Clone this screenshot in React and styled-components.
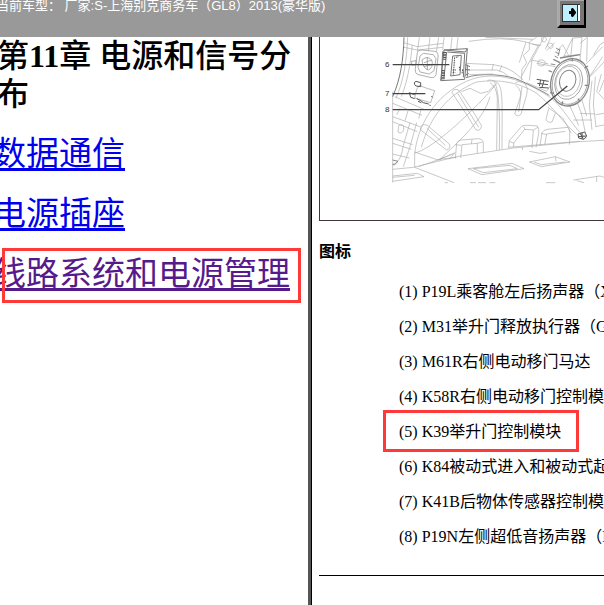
import React from "react";
import styled, { createGlobalStyle } from "styled-components";

const GlobalStyle = createGlobalStyle`
* {
  box-sizing: border-box;
}
body {
  margin: 0;
  background: #ffffff;
  color: #000000;
  font-family: "Liberation Serif", "Noto Sans CJK SC", serif;
}
`;

const Page = styled.div`
  display: flex;
  flex-direction: column;
  height: 100vh;
  overflow: hidden;
`;

const TopBar = styled.header`
  display: flex;
  justify-content: space-between;
  flex: none;
  height: 37px;
  padding-right: 18px;
  background: #999999;
`;

const Vehicle = styled.p`
  margin: -4px 0 0 -4px;
  color: #ffffff;
  font-family: "Liberation Sans", "Noto Sans CJK SC", sans-serif;
  font-size: 13px;
  line-height: 20px;
  white-space: pre;
`;

const ExitButton = styled.button`
  width: 29px;
  height: 28px;
  padding: 0;
  border: 0;
  background: none;

  svg {
    display: block;
  }
`;

const Frames = styled.div`
  display: flex;
  flex: 1;
  min-height: 0;
`;

const Chapters = styled.nav`
  flex: 0 0 51%;
  overflow: hidden;
`;

const ChapterTitle = styled.h1`
  margin: 0 0 22px -3px;
  font-size: 32px;
  font-weight: 500;
  line-height: 38px;
`;

const ChapterList = styled.ul`
  display: grid;
  justify-items: start;
  gap: 22px;
  margin: 0 0 0 -7px;
  padding: 0;
  list-style: none;
  font-size: 33px;
  line-height: 38px;
  white-space: nowrap;
`;

const Item = styled.li`
  position: relative;
`;

const ChapterLink = styled.a`
  color: ${({ $visited }) => ($visited ? "#551a8b" : "#0000ee")};
  text-decoration: underline;
  text-decoration-thickness: 3px;
  text-underline-offset: 3px;
`;

const Mark = styled.span`
  position: absolute;
  inset: ${({ $inset }) => $inset};
  border: 3px solid #ff3838;
  pointer-events: none;
`;

const Divider = styled.div`
  flex: 0 0 4px;
  border-left: 3px solid #555555;
  background: #000000;
`;

const Detail = styled.main`
  flex: 1;
  min-width: 0;
  padding-left: 7px;
  overflow: hidden;
`;

const Figure = styled.figure`
  height: 184px;
  margin: 0;
  padding-left: 60px;
  border-left: 1px solid #40363a;
  border-bottom: 1px solid #40363a;

  svg {
    display: block;
  }
`;

const LegendTitle = styled.h2`
  margin: 21px 0;
  font-size: 16px;
  line-height: 19px;
`;

const Legend = styled.ul`
  display: grid;
  justify-items: start;
  gap: 16px;
  margin: 0;
  padding: 0 0 29px 80px;
  border-bottom: 1px solid #000000;
  list-style: none;
  font-size: 16px;
  line-height: 19px;
  white-space: nowrap;
`;

const chapters = [
  { name: "数据通信" },
  { name: "电源插座" },
  { name: "线路系统和电源管理", visited: true, marked: true },
];

const parts = [
  "P19L乘客舱左后扬声器（X）",
  "M31举升门释放执行器（G）",
  "M61R右侧电动移门马达",
  "K58R右侧电动移门控制模块",
  "K39举升门控制模块",
  "K84被动式进入和被动式起动",
  "K41B后物体传感器控制模块",
  "P19N左侧超低音扬声器（I）",
];

const ExitIcon = () => (
  <svg width="29" height="28" viewBox="0 0 29 28" aria-hidden="true">
    <path d="M0 0h29v28H0z" fill="#000" />
    <path d="M0 0h27v25H3l-3 3z" fill="#aaa" />
    <path d="M3 1h24v24H3z" fill="#777" />
    <path d="M5 4h18v18H5z" fill="#333" />
    <path d="M6 5h14v16H6z" fill="#bdefff" />
    <path d="M21 5h2v16h-2z" fill="#fff" />
    <path d="M12 11h2V9l1-1h1l3 4v1l-3 4h-1l-1-1v-2h-2z" fill="#000" />
  </svg>
);

const Diagram = () => (
  <svg width="224" height="153" viewBox="0 21 672 459" role="img" aria-label="部件位置图">
    <g fill="none" stroke="#acacac" strokeWidth="2">
      {/* left pillar */}
      <path d="M38 185V458" />
      <path d="M72 22C70 90 62 145 38 200" stroke="#777" strokeWidth="3" />
      <path d="M83 22C80 95 71 150 48 205M97 45C91 105 82 155 64 200" />
      <path d="M72 38L112 50L190 40M72 52L112 60L188 52M118 22L112 65M150 22L145 62M176 22L169 66M192 22L188 60M216 22L212 58M234 22L230 58" />
      <path d="M38 220L126 256M44 200L132 238M38 260L120 290M38 275L112 305M38 325L98 344M38 340L94 358M38 372L88 384M60 235L50 255M84 242L75 272M56 287Q74 278 71 300Q66 314 54 306ZM90 278L70 346Q64 390 46 400L38 402M110 278L90 350L70 410M122 242L116 266" />
      <path d="M38 390L54 394L44 404H38" stroke="#888" strokeWidth="3" />
      {/* wheel arch */}
      <path d="M104 412V370C116 270 180 180 280 146C370 120 450 165 492 190C550 220 580 300 620 325" />
      <path d="M124 352C150 260 205 190 290 156C360 146 420 158 470 190C520 230 550 280 592 315M104 370Q180 345 330 185L350 160M178 390C240 330 310 270 330 200M244 185L270 175L302 190L325 184L344 164M104 366L174 390L218 372" />
      <path d="M258 143C300 128 380 132 422 152C460 170 490 185 508 196" stroke="#8a8a8a" strokeWidth="3" />
      <path d="M216 188Q218 174 236 180L280 246L304 286Q304 304 288 300L264 260ZM232 188L266 244L296 292M122 292Q124 280 142 286L208 342Q214 356 200 360L122 300ZM140 294L196 346" />
      <path d="M322 152Q332 146 352 158C370 175 366 215 366 358M330 158Q350 170 352 205L350 360M342 154Q362 180 358 360" />
      <path d="M406 158Q418 150 436 162Q446 175 440 194L424 250Q416 264 404 252L420 204Q428 184 408 166M426 170L416 246M506 236L498 268Q502 280 516 276L526 250M504 232L548 264L574 310" />
      {/* hose and upper body */}
      <path d="M258 100L340 104Q386 110 416 138L430 150M258 120L350 120Q372 124 388 142M266 134L340 132M340 102L336 122M366 106L358 124M266 34Q370 18 438 36L476 48M438 36L418 98M476 44L424 140M456 42L484 46M316 22L458 28M424 150L426 118L440 98L430 76L448 60V36L470 22" />
      <path d="M452 96L492 22M470 100L526 110M448 152L456 90L506 102M474 104Q472 86 488 90Q502 96 492 106Q482 112 474 104M502 48Q506 34 518 42Q524 52 512 56ZM484 24Q498 14 500 30Q494 40 486 34ZM440 158L500 184L520 154M500 62L524 38M512 22L496 58" />
      <path d="M530 64L548 44L568 80M550 82L578 24L606 22M578 24L572 84M606 22L600 90M600 40L622 22M622 22L620 94M618 102L668 50M630 138L668 80M640 76L660 44L672 36M552 78L600 74" />
      <path d="M630 140L672 96M636 152L628 225L636 300M646 140L640 224L648 290M664 132L650 184L672 208M672 150L658 186M590 212L604 250L616 308M606 210L620 258M566 220L596 286M600 250L646 252M580 270L636 270M648 254L672 250M646 290L672 285M546 220L594 214" />
      {/* floor */}
      <path d="M38 418L100 412L230 380L400 354L596 335L672 331M104 412L222 458M116 410L178 388L230 382M174 390L226 368M208 388L224 370M448 364L480 370L500 367" />
      <path d="M226 386L230 340Q234 330 244 330L296 326Q312 328 310 344V368M242 384L246 344L292 340V370M226 344L244 346M276 328L274 342M292 340L308 336" />
      <path d="M386 352L388 332L426 288Q434 284 472 288Q478 294 476 310L468 352M400 352L402 338L434 298L460 300L456 354M388 334L402 340M430 290L436 300M460 300L474 292" />
      <path d="M480 346L486 308Q490 300 502 298L564 292Q572 296 568 344M494 344L500 312L556 304M484 310L500 314M384 352L600 334M426 350L428 360" />
      <path d="M264 416L396 400L432 416L306 434ZM280 416L390 406L412 416L310 428ZM448 396L526 380L570 396L484 410ZM462 396L484 404L556 396M526 380L528 394M580 450L660 438L672 442M590 452L612 458M650 440V456M38 438L112 430L132 440L38 454M38 442L104 436" />
      <path d="M194 458h10M270 458h18M294 458h24M328 458h18M498 458h28" />
    </g>
    <g fill="none" stroke="#888888" strokeWidth="2">
      {/* bracket behind 6 */}
      <path d="M112 68Q114 58 126 60L164 64Q176 66 174 82L168 134Q164 146 150 142L116 134Q104 132 106 116ZM120 78L130 70L160 74L168 86L162 122L148 132L120 126L114 112Z" />
      <path d="M126 90Q144 74 156 92Q160 112 146 120Q128 116 126 90M132 98L156 90M132 110L156 104M142 82V120M94 94L108 92V104L96 106Z" />
      {/* speaker */}
      <ellipse cx="570" cy="157" rx="57" ry="72" transform="rotate(16 570 157)" fill="#fff" strokeWidth="4" />
      <ellipse cx="570" cy="157" rx="52" ry="67" transform="rotate(16 570 157)" />
      <ellipse cx="566" cy="156" rx="41" ry="53" transform="rotate(16 566 156)" />
      <ellipse cx="564" cy="154" rx="36" ry="46" transform="rotate(16 564 154)" stroke="#aaa" />
      <ellipse cx="563" cy="152" rx="24" ry="32" transform="rotate(16 563 152)" strokeWidth="3" />
      <path d="M520 88L540 98M540 84L600 74M506 122L516 126M510 188L522 190M546 224L548 214M600 216L594 206M624 108L614 114M624 166L614 166M578 84L576 94" strokeWidth="4" />
    </g>
    <g fill="none" stroke="#555555" strokeWidth="3">
      {/* module 6 */}
      <path d="M192 60L262 56L254 148L182 152Z" fill="#fff" stroke="#777" />
      <path d="M188 64L184 150M200 66L192 142M192 60L256 66L262 56M202 66L254 70L250 142" stroke="#777" />
      <path d="M194 66V90M190 120V148" strokeWidth="9" strokeDasharray="3 2" />
      <path d="M218 78L244 76L240 134L212 138Z" stroke="#777" />
      <path d="M224 82L220 134M228 82L236 80M218 120H228M218 128H226M238 110L240 122M248 118L246 132" strokeDasharray="5 2" />
      <path d="M256 104L270 110M258 118L270 120M256 136L266 130M262 104V140" stroke="#777" />
      {/* module 7 */}
      <path d="M118 166L138 174L164 182L152 218L104 204L110 178Z" fill="#fff" stroke="#999" strokeWidth="2" />
      <path d="M104 164Q100 156 108 154L122 158V170L108 168ZM104 194L88 188L92 202L104 206M110 206L122 212L130 218L146 222M114 214L124 218M148 224L152 228M154 198L158 202" />
      {/* speaker connectors */}
      <path d="M470 148L506 154M472 160L504 164M478 172L506 174M482 150L478 168M492 152L486 172" />
      <path d="M528 54L538 60M526 66L538 72M524 78L534 84M540 56L534 78M512 102L526 104" strokeWidth="2" />
      <path d="M594 312L614 306L620 318L612 328L596 324ZM600 310L610 326M594 320L618 318M606 308V328" />
    </g>
    <g fill="none" stroke="#444444" strokeWidth="4">
      <path d="M38 104H208M38 191H136M38 239H476L562 168" />
    </g>
    <g fill="#333333" fontFamily="Liberation Sans, sans-serif" fontSize="24">
      <text x="15" y="112">6</text>
      <text x="15" y="199">7</text>
      <text x="15" y="247">8</text>
    </g>
  </svg>
);

const App = () => {
  return (
    <Page>
      <GlobalStyle />
      <TopBar>
        <Vehicle>当前车型： 厂家:S-上海别克商务车（GL8）2013(豪华版)</Vehicle>
        <ExitButton type="button" aria-label="退出">
          <ExitIcon />
        </ExitButton>
      </TopBar>
      <Frames>
        <Chapters>
          <ChapterTitle>
            第<b>11</b>章 电源和信号分布
          </ChapterTitle>
          <ChapterList>
            {chapters.map((chapter) => (
              <Item key={chapter.name}>
                <ChapterLink href="#" $visited={chapter.visited}>
                  {chapter.name}
                </ChapterLink>
                {chapter.marked && <Mark $inset="-7px -11px -10px 9px" />}
              </Item>
            ))}
          </ChapterList>
        </Chapters>
        <Divider />
        <Detail>
          <Figure>
            <Diagram />
          </Figure>
          <LegendTitle>图标</LegendTitle>
          <Legend>
            {parts.map((part, index) => (
              <Item key={part}>
                ({index + 1}) {part}
                {index === 4 && <Mark $inset="-12px -18px -11px -16px" />}
              </Item>
            ))}
          </Legend>
        </Detail>
      </Frames>
    </Page>
  );
};

export default App;
